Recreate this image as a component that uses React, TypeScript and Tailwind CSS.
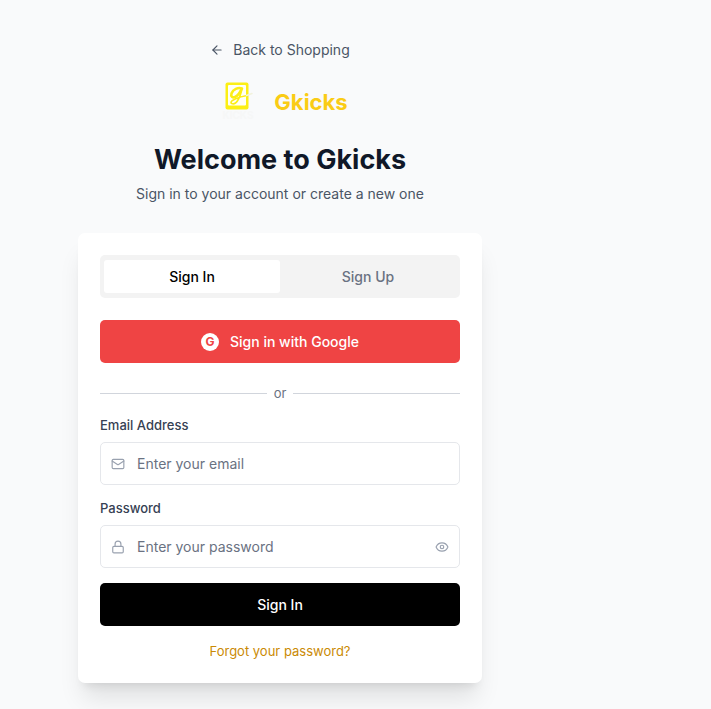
import { useState } from "react";
import { ArrowLeft, Eye, Lock, Mail } from "lucide-react";

function Logo() {
  return (
    <svg viewBox="-6 0 52 40" className="h-10 w-[52px]" role="img" aria-label="Gkicks logo">
      <rect x="7.500" y="2.500" width="23" height="27" rx="2" fill="#fcef14" />
      <rect x="10" y="5" width="18" height="20.500" rx="1" fill="#fffff6" />
      <path
        d="M24 8.500C20 7 15 9.500 13.500 13.500c-1 3 1 4.500 3.500 3.500 3-1.200 5-4.500 6.500-8"
        fill="none"
        stroke="#fcee14"
        strokeWidth="2.600"
        strokeLinecap="round"
      />
      <path
        d="M24 9C22.500 15 21 20.500 17.500 23c-2 1.400-4.500.8-4.500-.5 0-2 7-5.500 16-7"
        fill="none"
        stroke="#fcee14"
        strokeWidth="1.700"
        strokeLinecap="round"
      />
      <path d="M28.500 15.500l5.500-2" stroke="#f1f2dc" strokeWidth="1.500" strokeLinecap="round" />
      <text
        x="20"
        y="39"
        textAnchor="middle"
        fontFamily="Inter, sans-serif"
        fontSize="10"
        fontWeight="700"
        fill="#f6f7f7"
      >
        KICKS
      </text>
    </svg>
  );
}

export default function App() {
  const [visible, setVisible] = useState(false);

  return (
    <div className="min-h-screen overflow-hidden bg-[#f9fafb] pr-[151px] font-['Inter',sans-serif] text-sm leading-5">
      <main className="mx-auto w-full max-w-[404px] pt-10">
        <header className="flex flex-col items-center">
          <a href="#" className="flex items-center gap-[9px] text-gray-600">
            <ArrowLeft size={14} />
            Back to Shopping
          </a>
          <div className="mt-5 flex items-center gap-[10px]">
            <Logo />
            <span className="pt-1 text-[22px] leading-8 font-bold text-[#facc15]">Gkicks</span>
          </div>
          <h1 className="mt-6 text-[27px] leading-8 font-bold text-gray-900">Welcome to Gkicks</h1>
          <p className="mt-2 text-gray-600">Sign in to your account or create a new one</p>
        </header>

        <section className="mt-[29px] rounded-[7px] bg-white px-[22px] pt-[22px] pb-[23px] shadow-xl">
          <div role="tablist" className="grid h-[43px] grid-cols-2 rounded-[5px] bg-[#f3f3f3] p-1 font-medium">
            <button role="tab" aria-selected="true" className="my-px rounded-[3px] bg-white text-black">
              Sign In
            </button>
            <button role="tab" aria-selected="false" className="rounded-[3px] text-gray-500">
              Sign Up
            </button>
          </div>

          <button className="mt-[22px] flex h-[43px] w-full items-center justify-center gap-[11px] rounded-[5px] bg-[#ef4444] font-medium text-white">
            <span className="flex size-[18px] items-center justify-center rounded-full bg-white text-xs font-bold text-[#ef4444]">
              G
            </span>
            Sign in with Google
          </button>

          <div className="mt-[21px] flex items-center gap-[7px] text-[13px] leading-[18px] text-gray-500">
            <span className="h-px flex-1 bg-gray-300" />
            or
            <span className="h-px flex-1 bg-gray-300" />
          </div>

          <form onSubmit={(e) => e.preventDefault()}>
            <label htmlFor="email" className="mt-[14px] block text-[13px] leading-[18px] font-medium text-gray-700">
              Email Address
            </label>
            <div className="mt-2 flex h-[43px] items-center gap-3 rounded-[5px] border border-gray-200 px-[10px] text-gray-400">
              <Mail size={14} />
              <input
                id="email"
                type="email"
                placeholder="Enter your email"
                className="min-w-0 flex-1 text-gray-900 outline-none placeholder:text-gray-500"
              />
            </div>

            <label htmlFor="password" className="mt-[14px] block text-[13px] leading-[18px] font-medium text-gray-700">
              Password
            </label>
            <div className="mt-2 flex h-[43px] items-center gap-3 rounded-[5px] border border-gray-200 px-[10px] text-gray-400">
              <Lock size={14} />
              <input
                id="password"
                type={visible ? "text" : "password"}
                placeholder="Enter your password"
                className="min-w-0 flex-1 text-gray-900 outline-none placeholder:text-gray-500"
              />
              <button type="button" aria-label="Show password" onClick={() => setVisible(!visible)}>
                <Eye size={14} />
              </button>
            </div>

            <button className="mt-[15px] h-[43px] w-full rounded-[5px] bg-black font-medium text-white">Sign In</button>
          </form>

          <div className="mt-4 text-center text-[13px] leading-[18px]">
            <a href="#" className="text-[#ca8a04]">
              Forgot your password?
            </a>
          </div>
        </section>
      </main>
    </div>
  );
}
